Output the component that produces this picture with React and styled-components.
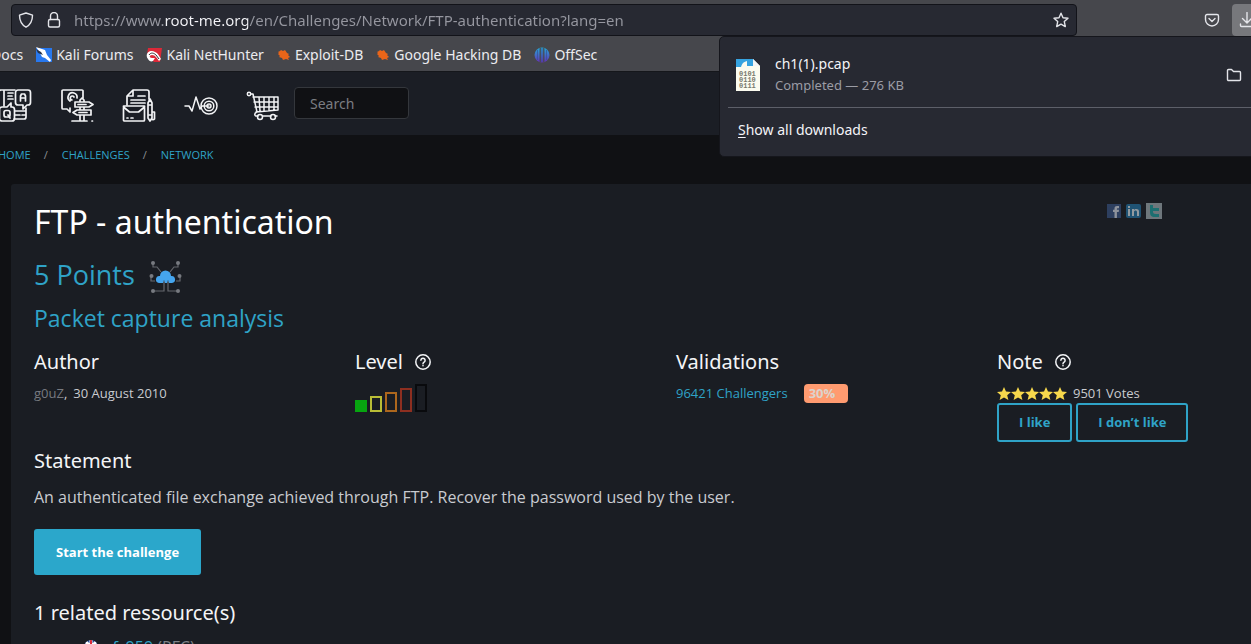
import React from "react";
import styled, { createGlobalStyle } from "styled-components";

const ui = '"Noto Sans", sans-serif';
const body = '"Open Sans", sans-serif';
const blue = "#2fa3c7";

const GlobalStyle = createGlobalStyle`
  * { box-sizing: border-box; }
  body { margin: 0; background: #101114; overflow: hidden; }
  h1, h2, h3, p, ul, ol { margin: 0; padding: 0; font-weight: 400; }
  li { list-style: none; }
  a { text-decoration: none; color: inherit; }
  button, input { font: inherit; margin: 0; }
  svg { display: block; flex: none; }
`;

const Shell = styled.div`
  height: 100vh;
  display: flex;
  flex-direction: column;
  overflow: hidden;
  position: relative;
  font-family: ${ui};
  color: #c9cbd0;
`;

const Toolbar = styled.div`
  display: flex;
  align-items: center;
  background: #46474c;
  padding: 4px 0 4px 11px;
`;

const UrlBar = styled.label`
  flex: 1;
  height: 32px;
  display: flex;
  align-items: center;
  gap: 12px;
  padding: 0 7px 0 6px;
  background: #272932;
  border: 1px solid #121319;
  border-radius: 4px;
  color: #e4e5ea;
`;

const UrlInput = styled.input`
  flex: 1;
  min-width: 0;
  border: 0;
  padding: 0;
  outline: 0;
  font-size: 15px;
  line-height: 24px;
  background: linear-gradient(90deg, #9697a0 90px, #f4f4f8 90px, #f4f4f8 174px, #9697a0 174px);
  -webkit-background-clip: text;
  background-clip: text;
  -webkit-text-fill-color: transparent;
`;

const ToolButtons = styled.div`
  display: flex;
  align-items: center;
  gap: 12px;
  width: 184px;
  justify-content: flex-end;
  margin-right: -10px;
`;

const IconButton = styled.button`
  display: grid;
  place-items: center;
  width: ${(p) => (p.$wide ? 29 : 16)}px;
  height: 32px;
  padding: 0;
  border: 0;
  border-radius: 4px;
  background: ${(p) => (p.$active ? "#77787c" : "transparent")};
  color: #e4e5ea;
`;

const Bookmarks = styled.nav`
  display: flex;
  gap: 13px;
  align-items: center;
  padding-bottom: 1px;
  height: 32px;
  margin-left: -9px;
  background: #46474c;
  border-bottom: 1px solid #15171b;
`;

const Bookmark = styled.a`
  display: flex;
  align-items: center;
  gap: 4px;
  font-size: 14px;
  line-height: 24px;
  color: #ececf0;
  white-space: nowrap;
`;

const Page = styled.main`
  flex: 1;
  min-height: 0;
  overflow: hidden;
  background: #101114;
  font-family: ${body};
`;

const SiteHeader = styled.header`
  display: flex;
  align-items: center;
  padding: 12px 0 13px;
  margin-left: -2px;
  background: #1b1e25;
  color: #f2f3f5;
`;

const SiteNav = styled.nav`
  display: flex;
  gap: 28px;
  margin-right: 14px;
  padding-top: 4px;
`;

const SearchInput = styled.input`
  width: 115px;
  height: 32px;
  padding: 0 15px;
  background: #101114;
  border: 1px solid #34373c;
  border-radius: 4px;
  font-size: 14px;
  font-family: ${ui};
  color: #ddd;
  &::placeholder { color: #7b7d82; opacity: 1; }
`;

const Breadcrumb = styled.ol`
  display: flex;
  margin-left: -2px;
  padding: 12px 0 21px;
  font-size: 11px;
  line-height: 16px;
  text-transform: uppercase;
  color: ${blue};
  li + li::before { content: "/"; color: #8d9095; padding: 0 14px 0 13px; }
`;

const Card = styled.article`
  margin: 0 -91px 0 11px;
  padding: 14px 24px 24px 23px;
  background: #1a1d23;
  border-radius: 3px;
`;

const TitleRow = styled.div`
  display: flex;
  justify-content: space-between;
  align-items: flex-start;
  padding-right: 156px;
`;

const Title = styled.h1`
  font-family: ${ui};
  font-size: 32px;
  line-height: 48px;
  color: #fff;
`;

const Socials = styled.div`
  display: flex;
  gap: 4px;
  padding-top: 5px;
  opacity: 0.6;
`;

const Points = styled.h2`
  display: flex;
  align-items: center;
  gap: 14px;
  margin-top: 10px;
  font-size: 27px;
  line-height: 36px;
  color: ${blue};
  svg { margin-top: 4px; }
`;

const Subtitle = styled.h2`
  margin: 8px 0 14px;
  font-size: 23px;
  line-height: 32px;
  color: ${blue};
`;

const Facts = styled.div`
  display: grid;
  grid-template-columns: repeat(4, 1fr);
  font-size: 13px;
  line-height: 19px;
`;

const Heading = styled.h3`
  display: flex;
  align-items: center;
  gap: 12px;
  font-family: ${ui};
  font-size: 20px;
  line-height: 28px;
  color: #f4f5f7;
`;

const Line = styled.div`
  display: flex;
  align-items: center;
  gap: ${(p) => p.$gap || 0}px;
  margin-top: 8px;
`;

const Muted = styled.a` color: #777a80; `;
const Link = styled.a` color: ${blue}; `;

const Badge = styled.span`
  width: 44px;
  height: 19px;
  padding-left: 5px;
  border-radius: 4px;
  background: #ff9b70;
  color: #dcd3cc;
  font-weight: 700;
`;

const Levels = styled.div`
  display: flex;
  align-items: flex-end;
  gap: 3px;
  margin-top: 8px;
`;

const LevelBar = styled.span`
  width: 12px;
  height: ${(p) => p.$h}px;
  border: 2px solid ${(p) => p.$color};
  background: ${(p) => (p.$full ? p.$color : "transparent")};
`;

const Stars = styled.span` display: flex; `;

const Votes = styled.div` display: flex; gap: 4px; `;

const VoteButton = styled.button`
  padding: 0 20px;
  height: 39px;
  background: transparent;
  border: 2px solid ${blue};
  border-radius: 3px;
  color: ${blue};
  font-size: 13px;
  font-weight: 700;
`;

const Section = styled.section` margin-top: ${(p) => p.$top}px; `;

const Statement = styled.p`
  margin-top: 10px;
  font-size: 16px;
  line-height: 24px;
`;

const StartButton = styled.button`
  display: block;
  margin-top: 20px;
  height: 46px;
  padding: 0 22px;
  border: 0;
  border-radius: 3px;
  background: #2ba7cb;
  color: #fff;
  font-size: 13px;
  font-weight: 700;
`;

const Resource = styled.li`
  display: flex;
  align-items: center;
  gap: 8px;
  margin: 8px 0 0 50px;
  font-size: 16px;
  line-height: 24px;
  color: #7f8287;
`;

const Downloads = styled.aside`
  position: absolute;
  top: 36px;
  right: -12px;
  width: 544px;
  padding: 17px 9px 13px 8px;
  background: #272932;
  border: 1px solid #15161c;
  border-radius: 5px;
`;

const DownloadItem = styled.div`
  display: flex;
  align-items: center;
  padding: 0 11px 11px 8px;
  border-bottom: 1px solid #5d5f69;
  color: #f4f4f8;
`;

const DownloadText = styled.div`
  flex: 1;
  margin-left: 15px;
`;

const FileName = styled.div` font-size: 14px; line-height: 20px; `;
const FileInfo = styled.div` font-size: 13px; line-height: 22px; color: #9b9ca5; `;

const ShowAll = styled.button`
  display: block;
  margin-top: 9px;
  padding: 0 10px;
  border: 0;
  background: none;
  color: #f4f4f8;
  font-size: 14px;
  line-height: 26px;
  u { text-underline-offset: 2px; }
`;

const Svg = ({ s = 16, w = s, h = s, box, sw = 1.4, children }) => (
  <svg width={w} height={h} viewBox={box || `0 0 ${w} ${h}`} fill="none" stroke="currentColor"
    strokeWidth={sw} strokeLinecap="round" strokeLinejoin="round" aria-hidden="true">{children}</svg>
);

const Shield = () => <Svg><path d="M8 1 14.5 3.2C14.5 9 12.8 12.4 8 15.2 3.2 12.4 1.5 9 1.5 3.2Z" /></Svg>;
const Lock = () => <Svg><rect x="2.5" y="7.5" width="11" height="7.5" rx="1.5" /><path d="M4.5 7.5V4a3.5 3.5 0 0 1 7 0v3.5" /></Svg>;
const StarOutline = () => <Svg><path d="m8 1.2 2 4.5 5 .5-3.7 3.4 1 5L8 12.1l-4.3 2.5 1-5L1 6.200l5-.5Z" /></Svg>;
const Pocket = () => <Svg><path d="M3 2.5h10a1.5 1.5 0 0 1 1.5 1.5v3.5a6.5 6.5 0 0 1-13 0V4A1.5 1.5 0 0 1 3 2.5Z" /><path d="m5 6.5 3 3 3-3" /></Svg>;
const DownloadArrow = () => <Svg><path d="M8 .5v10M3.5 6.5 8 11l4.5-4.5M1.5 12v1.5a1 1 0 0 0 1 1h11a1 1 0 0 0 1-1V12" /></Svg>;
const Folder = () => <Svg><path d="M1.5 12.5v-9a1 1 0 0 1 1-1h3l2 2h6a1 1 0 0 1 1 1v7a1 1 0 0 1-1 1h-11a1 1 0 0 1-1-1Z" /></Svg>;
const Help = () => <Svg s={16} sw={1.5}><circle cx="8" cy="8" r="7.2" /><path d="M5.9 6.3a2.1 2.1 0 1 1 3.2 1.8c-.8.5-1.1.8-1.1 1.6M8 11.6v.2" /></Svg>;

const KaliForums = () => (
  <svg width="16" height="16" viewBox="0 0 16 16"><path d="M0 1h16v14H0Z" fill="#2878ee" /><path d="M0 0 9 3l2 5 4 5-1 2-5-4-3-1-2-4Z" fill="#fff" /><path d="m0 2 5 3 2 3-5-2Z" fill="#26324a" /></svg>
);
const NetHunter = () => (
  <svg width="16" height="16" viewBox="0 0 16 16"><path d="M2 1h14l-2 14H8L1 8Z" fill="#dc2938" /><path d="M2 12C-2 7 4 2 9 5c3 1 4 4 6 7l-2 2c-2-3-4-6-7-6-3 0-3 3 0 3h3l-2 3c-2 1-4 0-5-2Z" fill="#fff" /><path d="M3 8c2-3 5-2 7 0l3 4" fill="none" stroke="#332a30" strokeWidth="1" /></svg>
);
const ExploitDb = () => (
  <svg width="14" height="16" viewBox="0 0 14 16"><path d="m1 5 2-1 1-1 2 1 2-1 2 3 2 1-1 1 2 2-2 1 1 2-3-1-3 1-1-2-3-1 1-1-2-2 1-1Z" fill="#e96519" /></svg>
);
const OffSec = () => (
  <svg width="16" height="16" viewBox="0 0 16 16"><defs><linearGradient id="off" x1="0" y1="0" x2="0" y2="1"><stop stopColor="#23a9d8" /><stop offset="1" stopColor="#6430b2" /></linearGradient></defs><circle cx="8" cy="8" r="7.5" fill="url(#off)" /><path d="M6.2 1v14M9.8 1v14" stroke="#46474c" strokeWidth="1.2" /><path d="M8 1v14M3.5 3v10M12.5 3v10" stroke="#355094" strokeWidth=".7" /></svg>
);

const FaqIcon = () => (
  <Svg s={34} sw={1.7}>
    <path d="M9 2H3a2 2 0 0 0-2 2v16M6 3v15M9 2h8M10 5h5M10 8h4M10 11h5M16 31h10a2 2 0 0 0 2-2V20M17 23h11M17 27h5M24 27h4" />
    <path d="M20 2h10a2.5 2.5 0 0 1 2.5 2.5v10A2.5 2.5 0 0 1 30 17h-1l-4 4v-4h-5a2.5 2.5 0 0 1-2.5-2.5v-10A2.5 2.5 0 0 1 20 2Z" />
    <path d="M22.5 13V8l1-2h3l1 2v5M22.5 10h5" />
    <path d="M4 19h5l4-4v4h1a2.5 2.5 0 0 1 2.5 2.5v9A2.5 2.5 0 0 1 14 33H4a2.5 2.5 0 0 1-2.5-2.5v-9A2.5 2.5 0 0 1 4 19Z" />
    <rect x="6" y="22.5" width="6" height="6.5" rx="2" /><path d="m10 27 2 3" />
  </Svg>
);
const SignpostIcon = () => (
  <Svg s={34} sw={1.7}>
    <path d="M23 10V3a1 1 0 0 0-1-1H3a1 1 0 0 0-1 1v17a1 1 0 0 0 1 1h4l3 3v-4" />
    <path d="M10 13a4.5 4.5 0 1 1 7-3M12 12a2 2 0 1 1 2-3" />
    <path d="M20 14v-2l2-2 2 2v2M15 14h14l4 2.5-4 2.5H15ZM31 22H17l-4 2.5 4 2.5h14ZM20 19v3M24 19v3M20 27v6M24 27v6M12 33h15M32 33h.5M18 16.5h8M19 24.5h8" />
  </Svg>
);
const DocsIcon = () => (
  <Svg s={34} sw={1.7}>
    <path d="M5 17V8l6-6h14a2 2 0 0 1 2 2v7M11 2v6H5M16 8h7M9 12h14M9 15h14" />
    <path d="M1.5 18h21v14a1 1 0 0 1-1 1h-19a1 1 0 0 1-1-1ZM1.5 19l6 5h9l6-5M5 30h1M9 30h2" />
    <path d="M26 15l2-4 2 4v15l-2 3-2-3ZM26 17h4M26 27h4M30 24h2.5v7a2 2 0 0 1-3 0" />
  </Svg>
);
const PulseIcon = () => (
  <Svg s={34} sw={1.5}>
    <path d="M1 18h4l3 5 4-14 4 12 2-3h7" /><circle cx="25" cy="18" r="8" /><circle cx="25" cy="18" r="4.8" /><circle cx="25" cy="18" r="2" />
  </Svg>
);
const CartIcon = () => (
  <Svg s={34} sw={1.5}>
    <circle cx="3" cy="6" r="1.7" /><path d="M5 6h2l4 18M7 9h25v13l-22 2M8 14h24M9 19h23M13 9l1 14M18 9v14M23 9v14M28 9v13M11 24c-3 1-3 4 0 4h1M17 28h8M29 28h2" /><circle cx="14" cy="29" r="2.5" /><circle cx="27" cy="29" r="2.5" />
  </Svg>
);

const CloudNet = () => (
  <svg width="34" height="34" viewBox="0 0 34 34" fill="none">
    <g stroke="#65686e" strokeWidth="1.2"><path d="M4 3v4h4l4 5M29 3v4h-4l-4 5M2 16v5h4M31 16v5h-4M5 31h10V21M28 31h-9V21" /></g>
    <g fill="#777a80"><circle cx="4" cy="3" r="2" /><circle cx="29" cy="3" r="2" /><circle cx="2.5" cy="16" r="2" /><circle cx="30.5" cy="16" r="2" /><circle cx="4" cy="31" r="2" /><circle cx="29" cy="31" r="2" /></g>
    <path d="M10 23a3.500 3.500 0 0 1 1-7 5.500 5.500 0 0 1 11 0 3.500 3.500 0 0 1 1 7h-3l-1-3-1 3h-2l-1-3-1 3Z" fill="#45a5ee" />
  </svg>
);

const FileIcon = () => (
  <svg width="24" height="32" viewBox="0 0 24 32"><path d="M0 0h17l7 7v25H0Z" fill="#fbfbef" /><path d="M0 0h17l6 7H11V2C7 3 6 5 5 8H0Z" fill="#36a3e0" /><path d="M17 0v7h7Z" fill="#f4f4f4" />
    <g fill="#77786c" fontFamily="Liberation Mono, monospace" fontWeight="700" fontSize="7"><text x="3" y="17">0101</text><text x="3" y="23">0110</text><text x="3" y="29">0111</text></g></svg>
);

const FacebookIcon = () => <svg width="16" height="16" viewBox="0 0 16 16"><path d="M1 1h14v14H1Z" fill="#3b5687" /><path d="M8.500 15V9H7V6.800h1.500V5.500C8.500 3.700 9.600 3 11 3h2v2.200h-1.200c-.7 0-.9.3-.9.900v.7H13L12.700 9h-1.800v6Z" fill="#dce2ed" /></svg>;
const LinkedinIcon = () => <svg width="16" height="16" viewBox="0 0 16 16"><rect x="0" y="1" width="15" height="14" rx="2" fill="#2378aa" /><path d="M2 6h2v7H2ZM2 3h2v2H2ZM6 6h2v1c1-1.500 5-1.500 5 1.500V13h-2V9c0-2-3-2-3 0v4H6Z" fill="#e3edf3" /></svg>;
const TwitterIcon = () => <svg width="16" height="16" viewBox="0 0 16 16"><path d="M0 0h16v16H0Z" fill="#a7b3b8" /><path d="M4 2h3v3h6v3H7c0 3 1 3 6 3v3H9c-4 0-5-2-5-5Z" fill="#20a6a5" /></svg>;
const GoldStar = () => <svg width="14" height="14" viewBox="0 0 14 14"><path d="m7 0 2 4.600 5 .4-3.800 3.300L11.400 13 7 10.600 2.600 13l1.200-4.700L0 5l5-.4Z" fill="#f7d84c" /></svg>;
const Flag = () => <svg width="14" height="14" viewBox="0 0 14 14"><defs><clipPath id="round"><circle cx="7" cy="7" r="7" /></clipPath></defs><g clipPath="url(#round)"><path d="M0 0h14v14H0Z" fill="#2b4c9b" /><path d="m2 2 10 10M12 2 2 12M7 0v14M0 7h14" stroke="#fff" strokeWidth="3" /><path d="M7 0v14M0 7h14" stroke="#d92938" strokeWidth="2" /></g></svg>;

const bookmarks = [["Kali Forums", KaliForums], ["Kali NetHunter", NetHunter], ["Exploit-DB", ExploitDb], ["Google Hacking DB", ExploitDb], ["OffSec", OffSec]];
const siteLinks = [["Help", FaqIcon], ["Guides", SignpostIcon], ["Documentation", DocsIcon], ["Activity", PulseIcon], ["Shop", CartIcon]];
const levels = [["#07a510", 12], ["#b9bd36", 16], ["#ad671d", 20], ["#8e2f20", 24], ["#090a0d", 28]];

export default function App() {
  return (
    <Shell>
      <GlobalStyle />
      <Toolbar>
        <UrlBar>
          <Shield /><Lock />
          <UrlInput aria-label="Address" defaultValue="https://www.root-me.org/en/Challenges/Network/FTP-authentication?lang=en" />
          <StarOutline />
        </UrlBar>
        <ToolButtons>
          <IconButton aria-label="Save to Pocket"><Pocket /></IconButton>
          <IconButton aria-label="Downloads" $wide $active><DownloadArrow /></IconButton>
        </ToolButtons>
      </Toolbar>
      <Bookmarks>
        <Bookmark href="#docs">Docs</Bookmark>
        {bookmarks.map(([name, Icon]) => <Bookmark href="#bookmark" key={name}><Icon />{name}</Bookmark>)}
      </Bookmarks>
      <Page>
        <SiteHeader>
          <SiteNav>{siteLinks.map(([name, Icon]) => <a href="#site" aria-label={name} key={name}><Icon /></a>)}</SiteNav>
          <SearchInput type="search" placeholder="Search" aria-label="Search" />
        </SiteHeader>
        <Breadcrumb>
          <li><a href="#home">Home</a></li><li><a href="#challenges">Challenges</a></li><li><a href="#network">Network</a></li>
        </Breadcrumb>
        <Card>
          <TitleRow>
            <Title>FTP - authentication</Title>
            <Socials>
              <a href="#facebook" aria-label="Facebook"><FacebookIcon /></a>
              <a href="#linkedin" aria-label="LinkedIn"><LinkedinIcon /></a>
              <a href="#twitter" aria-label="Twitter"><TwitterIcon /></a>
            </Socials>
          </TitleRow>
          <Points>5 Points <CloudNet /></Points>
          <Subtitle>Packet capture analysis</Subtitle>
          <Facts>
            <div>
              <Heading>Author</Heading>
              <Line $gap={6}><span><Muted href="#author">g0uZ</Muted>,</span><span>30 August 2010</span></Line>
            </div>
            <div>
              <Heading>Level <Help /></Heading>
              <Levels>{levels.map(([color, h], i) => <LevelBar key={color} $color={color} $h={h} $full={i === 0} />)}</Levels>
            </div>
            <div>
              <Heading>Validations</Heading>
              <Line $gap={16}><Link href="#challengers">96421 Challengers</Link><Badge>30%</Badge></Line>
            </div>
            <div>
              <Heading>Note <Help /></Heading>
              <Line $gap={6}><Stars>{[0, 1, 2, 3, 4].map((n) => <GoldStar key={n} />)}</Stars>9501 Votes</Line>
              <Votes><VoteButton>I like</VoteButton><VoteButton>I don’t like</VoteButton></Votes>
            </div>
          </Facts>
          <Section $top={5}>
            <Heading>Statement</Heading>
            <Statement>An authenticated file exchange achieved through FTP. Recover the password used by the user.</Statement>
            <StartButton>Start the challenge</StartButton>
          </Section>
          <Section $top={24}>
            <Heading>1 related ressource(s)</Heading>
            <ul><Resource><Flag /><span><Link href="#rfc">rfc959</Link> (RFC)</span></Resource></ul>
          </Section>
        </Card>
      </Page>
      <Downloads>
        <DownloadItem>
          <FileIcon />
          <DownloadText>
            <FileName>ch1(1).pcap</FileName>
            <FileInfo>Completed — 276 KB</FileInfo>
          </DownloadText>
          <IconButton aria-label="Open folder"><Folder /></IconButton>
        </DownloadItem>
        <ShowAll><u>S</u>how all downloads</ShowAll>
      </Downloads>
    </Shell>
  );
}
